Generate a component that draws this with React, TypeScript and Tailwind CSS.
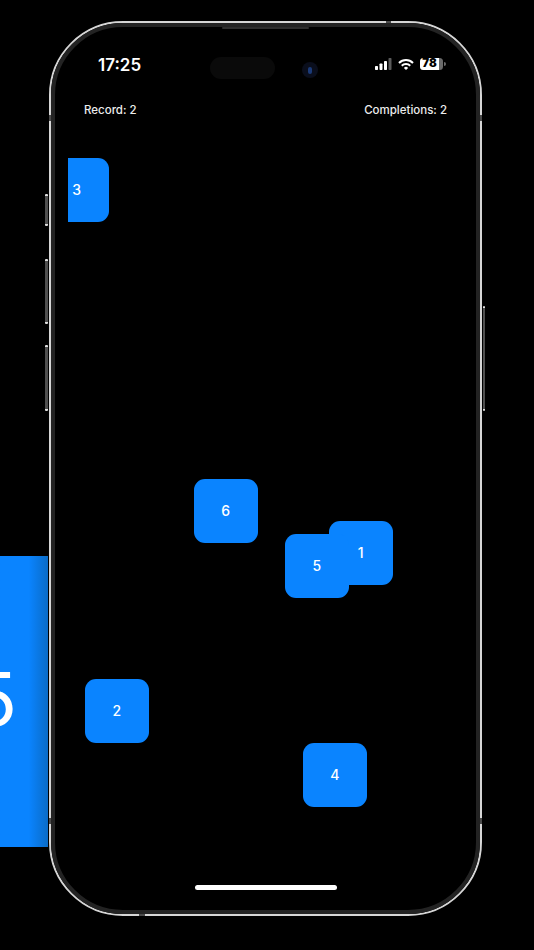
const font = "font-['Inter','Liberation_Sans',sans-serif]";

const squares = [
  { label: "3", className: "left-[-23px] top-[40px]" },
  { label: "6", className: "left-[126px] top-[361px]" },
  { label: "1", className: "left-[261px] top-[403px]" },
  { label: "5", className: "left-[217px] top-[416px]" },
  { label: "2", className: "left-[17px] top-[561px]" },
  { label: "4", className: "left-[235px] top-[625px]" },
];

const sideButtons = [
  "top-[171px] left-[-6px] h-[32px] w-[3px]",
  "top-[236px] left-[-6px] h-[65px] w-[3px]",
  "top-[322px] left-[-6px] h-[66px] w-[3px]",
  "top-[283px] left-[432px] h-[105px] w-[2px]",
];

const antennaBands = [
  "top-[92px] left-[-2px] h-[6px] w-[2px]",
  "top-[92px] left-[429px] h-[6px] w-[2px]",
  "top-[795px] left-[-2px] h-[6px] w-[2px]",
  "top-[795px] left-[429px] h-[6px] w-[2px]",
  "top-[-2px] left-[335px] h-[2px] w-[5px]",
  "top-[891px] left-[88px] h-[2px] w-[6px]",
];

function StatusIcons() {
  return (
    <div className="mt-[2px] flex h-[12px] items-center">
      <svg width="17" height="12" viewBox="0 0 17 12" fill="white">
        <rect x="0" y="8" width="3" height="4" rx="0.7" />
        <rect x="4.500" y="5.500" width="3" height="6.500" rx="0.7" />
        <rect x="9" y="3" width="3" height="9" rx="0.7" />
        <rect x="13.500" y="0" width="3" height="12" rx="0.7" fill="#5a5a5a" />
      </svg>
      <svg className="ml-[6px]" width="16" height="12" viewBox="0 0 16 12" fill="none" stroke="white" strokeWidth="2">
        <path d="M1 5A9.900 9.900 0 0 1 15 5" />
        <path d="M3.760 7.760A6 6 0 0 1 12.240 7.760" />
        <path d="M8 12L5.900 9.900A3 3 0 0 1 10.100 9.900Z" fill="white" stroke="none" />
      </svg>
      <div className="ml-[6px] flex items-center">
        <div className="flex h-[12px] w-[23px] rounded-[3.5px] bg-[#6b6b6b]">
          <div className="flex h-full w-[19px] items-center justify-center rounded-l-[3.5px] bg-white text-[11.5px] leading-none font-black text-black">
            78
          </div>
        </div>
        <div className="ml-[1px] h-[4px] w-[1.5px] rounded-r-sm bg-[#6b6b6b]" />
      </div>
    </div>
  );
}

export default function App() {
  return (
    <div className={`flex h-[950px] w-[534px] items-start overflow-hidden bg-black text-white ${font}`}>
      {/* banner behind the phone, its big number cut off by the page edge */}
      <div className="mt-[556px] flex h-[291px] w-[48px] shrink-0 items-center justify-end overflow-hidden bg-gradient-to-r from-[#0a84ff] from-60% to-[#0a6cc8] pr-[31px] pb-[6px]">
        <span className="shrink-0 text-[74px] leading-none font-normal">5</span>
      </div>

      {/* phone frame */}
      <div className="relative mt-[21px] ml-[1px] h-[895px] w-[433px] shrink-0 rounded-[74px] border-2 border-[#d6d6d6] bg-black">
        {sideButtons.map((c) => (
          <div key={c} className={`absolute rounded-[1px] border-y-2 border-y-[#dddddd] bg-[#4f4f4f] ${c}`} />
        ))}

        <div className="flex h-full flex-col rounded-[72px] border-[4px] border-[#232323]">
          {/* status bar */}
          <div className="flex items-start pt-[29px] pl-[43px]">
            <span className="mt-[1px] w-[43px] text-[17px] leading-[16px] font-semibold">17:25</span>
            <div className="mt-[1px] ml-[69px] h-[22px] w-[65px] rounded-full bg-[#0a0a0a]" />
            <div className="mt-[6px] ml-[27px] flex h-[16px] w-[16px] items-center justify-center rounded-full bg-[#0a0e1c]">
              <div className="h-[7px] w-[4px] rounded-full bg-[#1b3a78]" />
            </div>
            <div className="ml-[57px]">
              <StatusIcons />
            </div>
          </div>

          {/* score row */}
          <div className="mt-[23px] flex justify-between px-[29px] text-[11.5px] leading-[16px] font-medium text-[#ececec]">
            <span>Record: 2</span>
            <span>Completions: 2</span>
          </div>

          {/* game canvas, squares clip at its left edge */}
          <div className="relative ml-[13px] flex-1 overflow-hidden">
            {squares.map((s) => (
              <div
                key={s.label}
                className={`absolute flex h-[64px] w-[63.5px] items-center justify-center rounded-[11px] bg-[#0a84ff] pb-[2px] text-[14px] font-medium ${s.className}`}
              >
                {s.label}
              </div>
            ))}
          </div>

          {/* home indicator */}
          <div className="mx-auto mt-[1px] mb-[20px] h-[5px] w-[142px] rounded-full bg-white" />
        </div>

        {/* speaker slit over the frame */}
        <div className="absolute top-[4px] left-[171px] h-[2px] w-[87px] rounded-full bg-[#2e2e2e]" />
        {antennaBands.map((c) => (
          <div key={c} className={`absolute bg-[#4a4a4a] ${c}`} />
        ))}
      </div>
    </div>
  );
}
